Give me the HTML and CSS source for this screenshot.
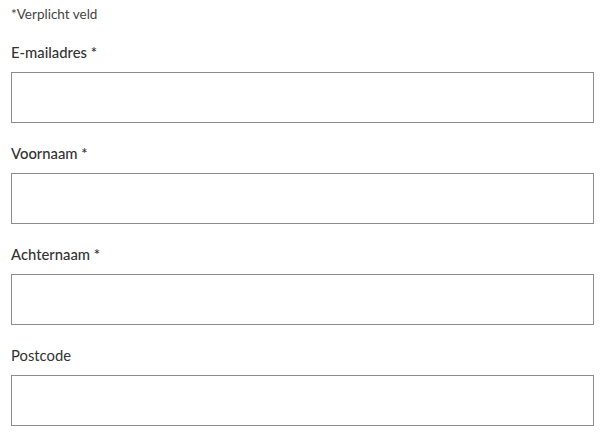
FILE: index.html
```html
<!DOCTYPE html>
<html lang="nl">
<head>
<meta charset="utf-8">
<link rel="stylesheet" href="styles.css">
</head>
<body>
<form class="form">
  <p class="note">*Verplicht veld</p>
  <div class="field">
    <label class="label" for="email">E-mailadres *</label>
    <input class="input" id="email" type="email">
  </div>
  <div class="field">
    <label class="label" for="first">Voornaam *</label>
    <input class="input" id="first" type="text">
  </div>
  <div class="field">
    <label class="label" for="last">Achternaam *</label>
    <input class="input" id="last" type="text">
  </div>
  <div class="field">
    <label class="label label-light" for="zip">Postcode</label>
    <input class="input" id="zip" type="text">
  </div>
</form>
</body>
</html>
```
FILE: styles.css
```css
html, body {
  margin: 0;
  padding: 0;
  background: #fff;
}
body {
  font-family: Lato, "Open Sans", sans-serif;
  color: #333;
}
.form {
  width: 583px;
  padding: 4px 0 0 11px;
  display: flex;
  flex-direction: column;
}
.note {
  margin: 0 0 17px;
  font-size: 13.5px;
  line-height: 20px;
  color: #444;
}
.field {
  display: flex;
  flex-direction: column;
  margin-bottom: 19px;
}
.label {
  font-size: 14.8px;
  line-height: 22px;
  font-weight: 500;
  margin-bottom: 9px;
  color: #333;
}
.label-light {
  font-weight: 400;
}
.input {
  box-sizing: border-box;
  width: 583px;
  height: 51px;
  margin: 0;
  border: 1px solid #8c8c8c;
  border-radius: 0;
  background: #fff;
  padding: 0 12px;
  font: inherit;
  outline: none;
}
```
